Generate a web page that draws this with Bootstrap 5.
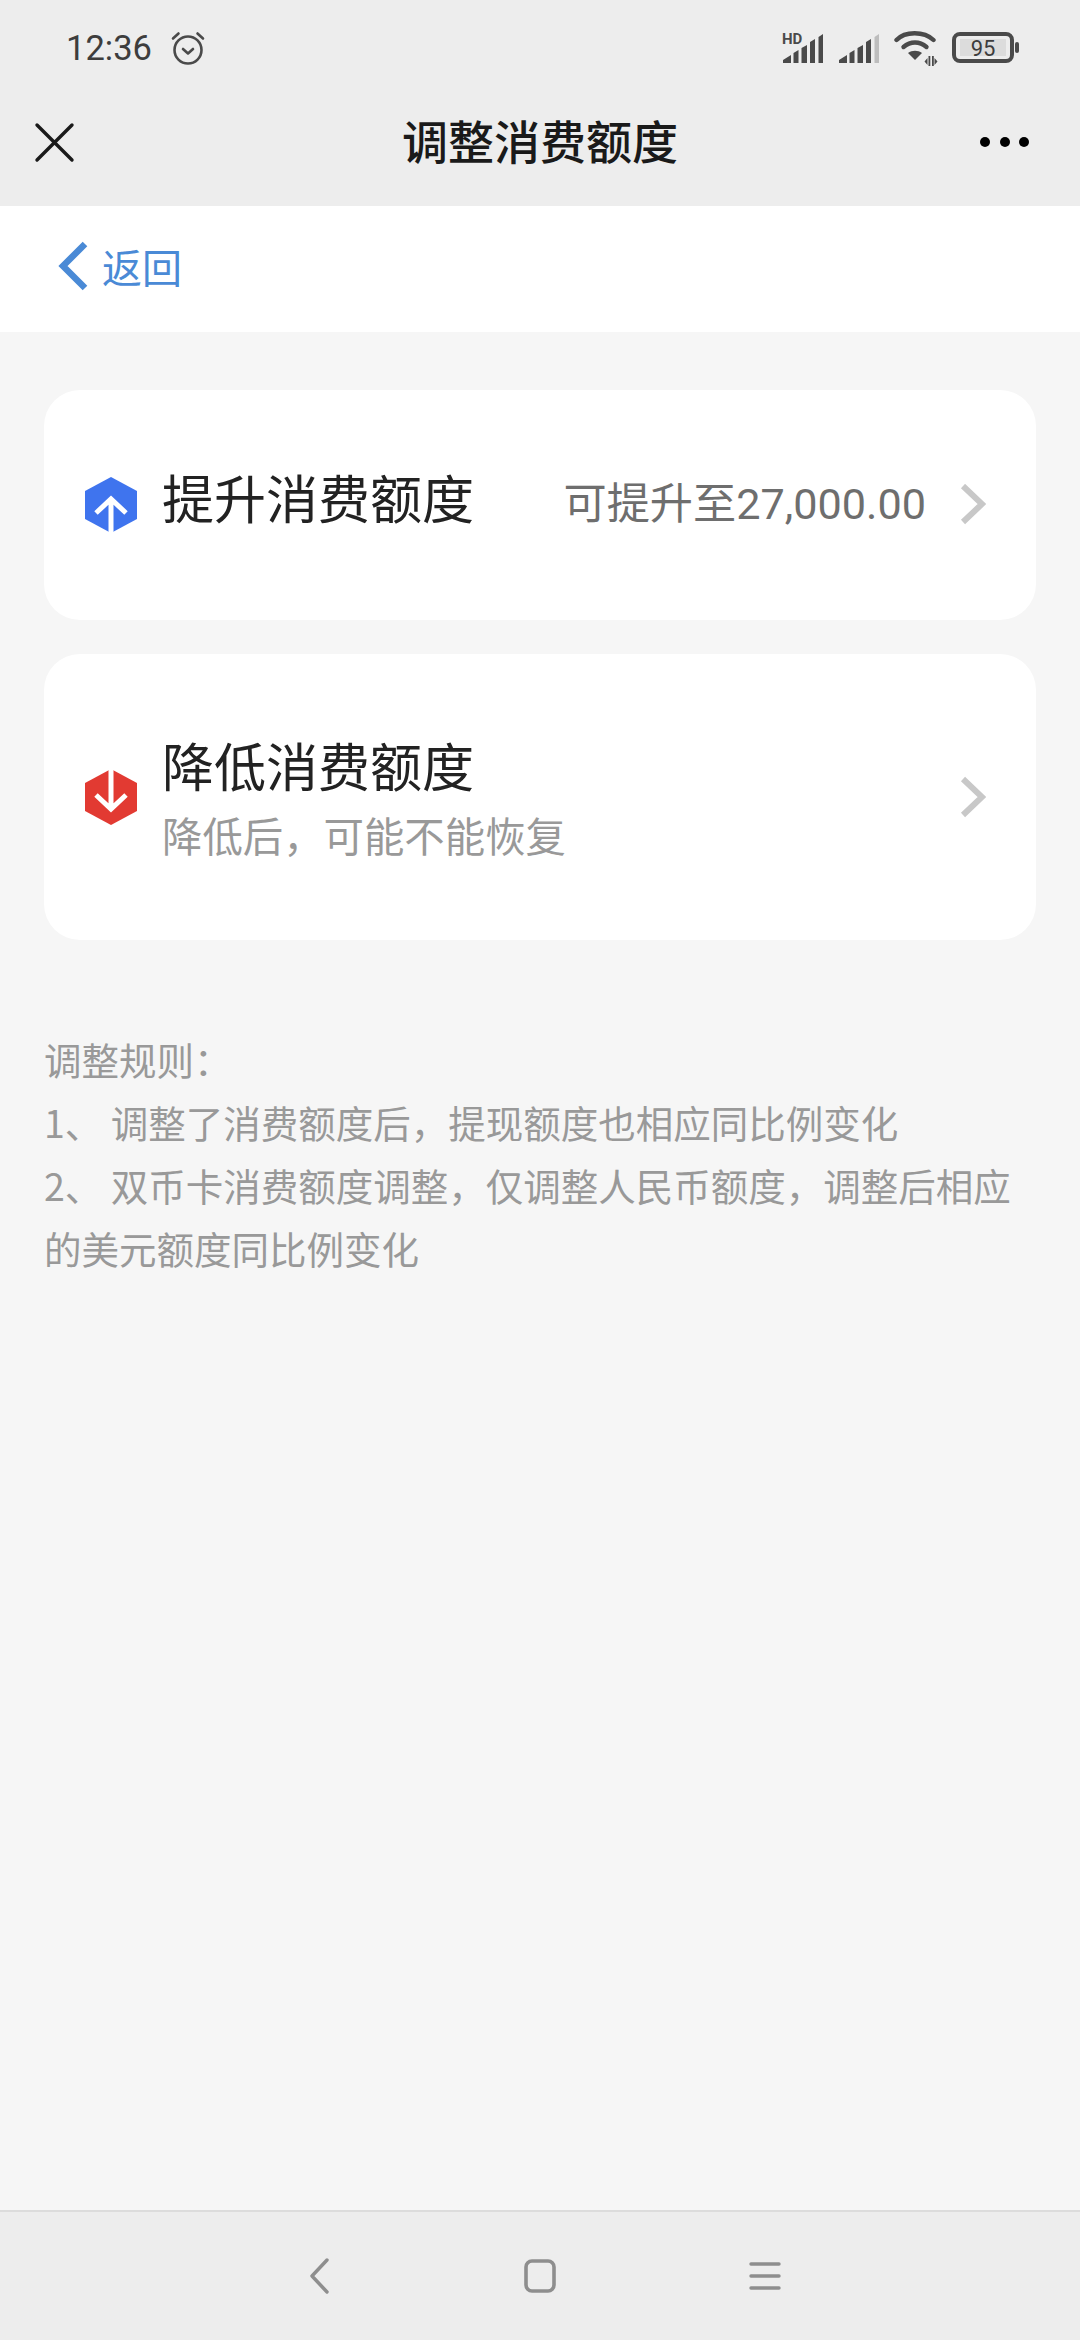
<!DOCTYPE html>
<html lang="zh-CN">
<head>
  <meta charset="UTF-8">
  <title>调整消费额度</title>
  <meta name="viewport" content="width=device-width, initial-scale=1">
  <link href="https://cdn.jsdelivr.net/npm/bootstrap@5.3.0/dist/css/bootstrap.min.css" rel="stylesheet">
  <style>
    body { background: #f6f6f6; font-family: "Noto Sans CJK SC", Roboto, sans-serif; width: 1080px; height: 2340px; overflow: hidden; }
    .phone-top { background: #ededed; height: 206px; }
    .status-line { height: 96px; padding: 0 60px 0 66px; color: #3d3d3d; }
    .clock-text { font-family: Roboto, sans-serif; font-size: 34.5px; line-height: 1; }
    .alarm-icon { margin-left: 18px; }
    .status-icons { gap: 14px; }
    .title-line { height: 92px; padding: 0 32px; }
    .title-side { flex: 1 1 0; }
    .more-dots { margin-right: 18px; }
    .page-title { font-size: 46px; font-weight: 500; color: #1a1a1a; line-height: 1; margin-bottom: 6px; }
    .back-line { background: #fff; height: 126px; padding: 0 0 6px 58px; color: #4a8ad6; }
    .back-text { font-size: 40px; line-height: 1; margin-left: 14px; }
    .list-wrap { padding: 58px 44px 0; }
    .quota-item { border: 0; border-radius: 36px; padding: 0 50px 0 40px; margin-bottom: 34px; }
    .quota-up { height: 230px; }
    .quota-down { height: 286px; margin-bottom: 0; }
    .quota-label { margin-left: 24px; }
    .quota-name { font-size: 52px; line-height: 76px; color: #222; }
    .quota-up .quota-name { margin-bottom: 16px; }
    .quota-hint { font-size: 40.4px; line-height: 64px; color: #999; }
    .quota-side { font-size: 43.2px; line-height: 1; color: #6e6e6e; font-family: Roboto, "Noto Sans CJK SC", sans-serif; margin-right: 34px; }
    .rules-box { padding: 87px 44px 0; font-size: 37.5px; line-height: 63px; color: #999; }
    .phone-bottom { position: fixed; left: 0; right: 0; bottom: 0; height: 130px; padding-left: 310px; background: #ededed; border-top: 2px solid #dcdcdc; }
    .home-key { margin: 0 193px 0 194px; }
  </style>
</head>
<body>
  <div class="phone-top">
    <div class="status-line d-flex align-items-center">
      <span class="clock-text">12:36</span>
      <svg class="alarm-icon" width="36" height="36" viewBox="0 0 36 36" fill="none" stroke="#4a4a4a" stroke-width="2.6" stroke-linecap="round" stroke-linejoin="round">
        <circle cx="18" cy="20" r="13.5"/><path d="M13 19l5 4.500 5-4.500"/><path d="M3 8.500 8.500 3.500M33 8.500 27.500 3.500"/>
      </svg>
      <div class="status-icons d-flex align-items-center ms-auto">
        <svg width="42" height="40" viewBox="0 -4 42 40">
          <text x="0" y="12" font-family="Roboto, sans-serif" font-size="15" font-weight="700" fill="#4a4a4a">HD</text>
          <path fill="#4a4a4a" d="M1 31v-3l8-5v8zM11.500 31V21l5-3v13zM19.500 31V16l5.500-3v18zM28 31V10l5-3v24zM36.500 31V5l4.500-3v29z"/>
        </svg>
        <svg width="42" height="32" viewBox="0 0 42 32">
          <path fill="#4a4a4a" d="M1 31v-3l8-5v8zM11.500 31V21l5-3v13zM19.500 31V16l5.500-3v18zM28 31V10l5-3v24z"/>
          <path fill="#bdbdbd" d="M36.500 31V5l4.500-3v29z"/>
        </svg>
        <svg width="44" height="38" viewBox="0 0 44 38" fill="none" stroke="#4a4a4a" stroke-width="4.400" stroke-linecap="round">
          <path d="M2.500 11C11 2 30 2 39.500 11"/><path d="M9.500 18c7-6 16-6 23 0"/>
          <path fill="#4a4a4a" stroke="none" d="M14 24c4-3 10-3 14 0l-7 7z"/>
          <path fill="#4a4a4a" stroke="none" d="M34.500 27h1.800v10h-1.800zM38 27h1.800v10H38zM33.500 29l-3 3.500 3 3.500zM40.500 29l3 3.500-3 3.500z"/>
        </svg>
        <svg width="68" height="32" viewBox="0 0 68 32">
          <rect x="2" y="2" width="58" height="27" rx="6" fill="none" stroke="#4a4a4a" stroke-width="4"/>
          <rect x="8" y="7" width="46" height="17" fill="#dcdcdc"/>
          <rect x="63" y="10" width="4" height="11" rx="2" fill="#4a4a4a"/>
          <text x="31" y="24" text-anchor="middle" font-family="Roboto, sans-serif" font-size="22" fill="#3d3d3d">95</text>
        </svg>
      </div>
    </div>
    <div class="title-line d-flex align-items-center">
      <div class="title-side d-flex">
        <svg width="44" height="44" viewBox="0 0 44 44" fill="none" stroke="#1a1a1a" stroke-width="3.400" stroke-linecap="round">
          <path d="M5 5 40 40M40 5 5 40"/>
        </svg>
      </div>
      <span class="page-title">调整消费额度</span>
      <div class="title-side d-flex justify-content-end">
        <svg class="more-dots" width="50" height="12" viewBox="0 0 50 12" fill="#000">
          <circle cx="5" cy="6" r="5"/><circle cx="25" cy="6" r="5"/><circle cx="44" cy="6" r="5"/>
        </svg>
      </div>
    </div>
  </div>

  <div class="back-line d-flex align-items-center">
    <svg width="30" height="50" viewBox="0 0 30 50" fill="none" stroke="#4a8ad6" stroke-width="6.500">
      <path d="M27 3 5 25l22 22"/>
    </svg>
    <span class="back-text">返回</span>
  </div>

  <div class="list-wrap">
    <div class="card quota-item quota-up flex-row align-items-center">
      <svg width="54" height="56" viewBox="0 0 54 56">
        <path fill="#3f74ee" d="M27 0 53 14v28L27 56 1 42V14z"/>
        <path fill="none" stroke="#fff" stroke-width="5" d="M27 56V22M12 36 27 22l15 14"/>
      </svg>
      <span class="quota-name quota-label">提升消费额度</span>
      <span class="quota-side ms-auto">可提升至27,000.00</span>
      <svg width="26" height="42" viewBox="0 0 26 42" fill="none" stroke="#c8c8c8" stroke-width="6">
        <path d="M3 2 22 20 3 38"/>
      </svg>
    </div>
    <div class="card quota-item quota-down flex-row align-items-center">
      <svg width="54" height="56" viewBox="0 0 54 56">
        <path fill="#e23a32" d="M27 0 53 14v28L27 56 1 42V14z"/>
        <path fill="none" stroke="#fff" stroke-width="5" d="M27 0v40M12 26l15 14 15-14"/>
      </svg>
      <div class="quota-label">
        <div class="quota-name">降低消费额度</div>
        <div class="quota-hint">降低后，可能不能恢复</div>
      </div>
      <svg class="ms-auto" width="26" height="42" viewBox="0 0 26 42" fill="none" stroke="#c8c8c8" stroke-width="6">
        <path d="M3 3 22 21 3 39"/>
      </svg>
    </div>
  </div>

  <div class="rules-box">
    <div>调整规则：</div>
    <div>1、 调整了消费额度后，提现额度也相应同比例变化</div>
    <div>2、 双币卡消费额度调整，仅调整人民币额度，调整后相应的美元额度同比例变化</div>
  </div>

  <div class="phone-bottom d-flex align-items-center">
    <svg width="20" height="36" viewBox="0 0 20 36" fill="none" stroke="#8e8e8e" stroke-width="3.400" stroke-linecap="round" stroke-linejoin="round">
      <path d="M17 2 2 18l15 16"/>
    </svg>
    <svg class="home-key" width="32" height="34" viewBox="0 0 32 34" fill="none" stroke="#8e8e8e" stroke-width="3.600">
      <rect x="2" y="2" width="28" height="30" rx="6"/>
    </svg>
    <svg width="32" height="30" viewBox="0 0 32 30" fill="none" stroke="#8e8e8e" stroke-width="3.400" stroke-linecap="round">
      <path d="M2 3h28M2 15h28M2 27h28"/>
    </svg>
  </div>

  <script src="https://cdn.jsdelivr.net/npm/bootstrap@5.3.0/dist/js/bootstrap.bundle.min.js"></script>
</body>
</html>
